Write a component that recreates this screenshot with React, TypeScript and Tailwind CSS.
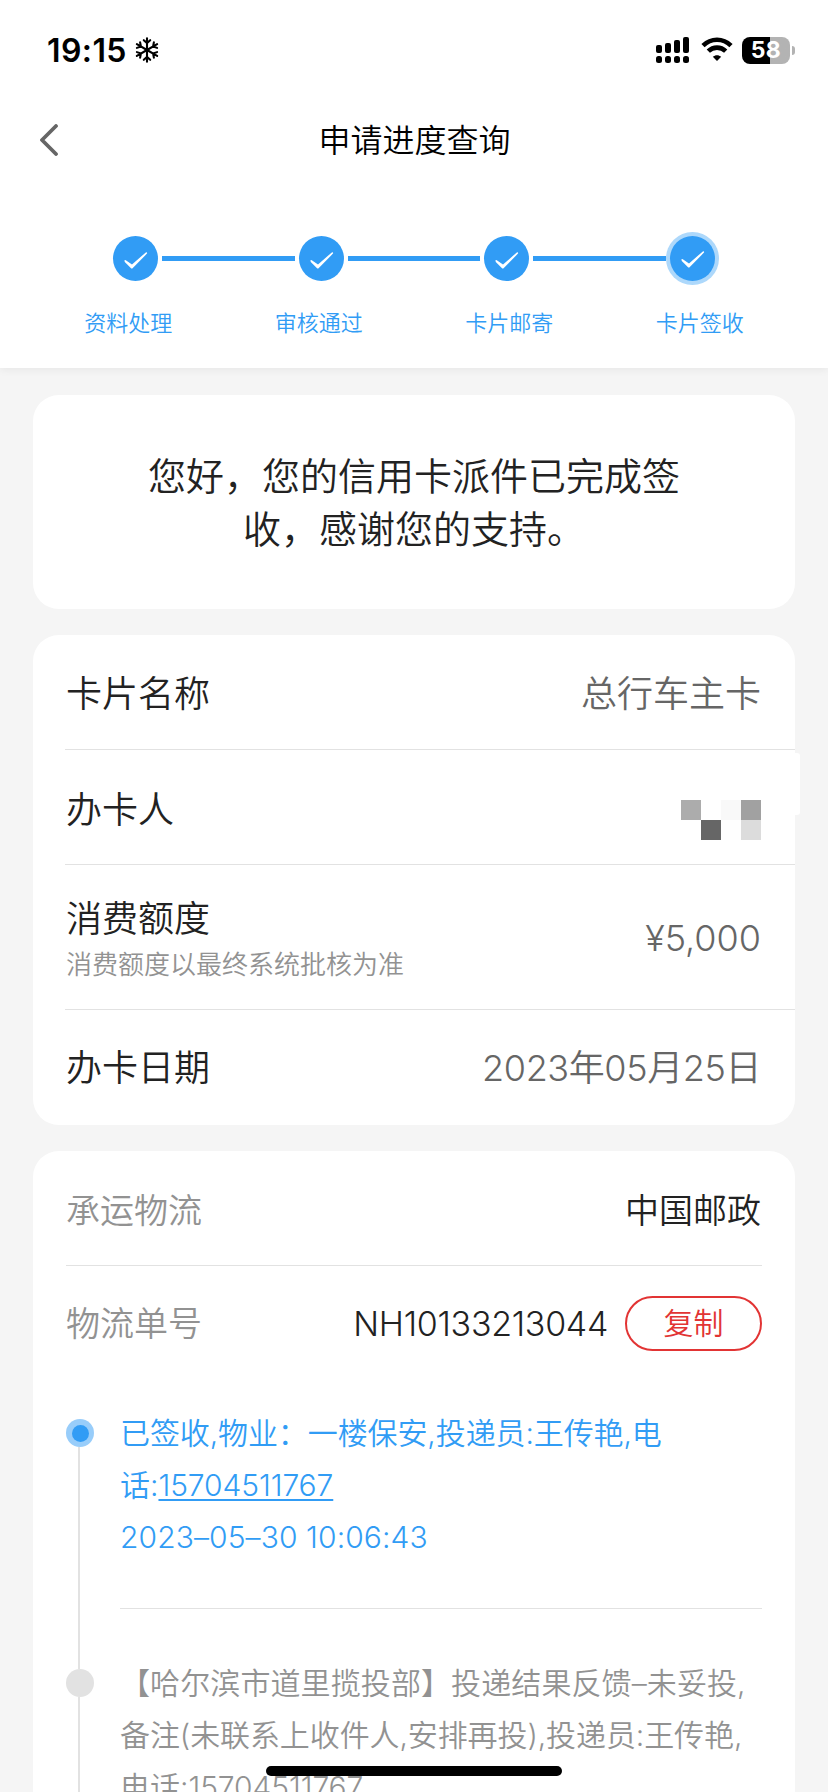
import type { ReactNode } from "react";

const steps = ["资料处理", "审核通过", "卡片邮寄", "卡片签收"];

function StatusBar() {
  return (
    <div className="flex h-[100px] items-center justify-between pl-[47px] pr-[33px]">
      <div className="flex items-center gap-[8px]">
        <span className="pt-[1px] text-[32px] leading-[40px] font-semibold tracking-[0.4px]">19:15</span>
        <svg className="h-[26px] w-6" viewBox="0 0 24 26" fill="none" stroke="black" strokeWidth="2.1" strokeLinecap="round">
          {[0, 60, 120, 180, 240, 300].map((angle) => (
            <path key={angle} d="M12 13V1.3M8.8 3.2L12 6L15.2 3.2" transform={`rotate(${angle} 12 13)`} />
          ))}
        </svg>
      </div>
      <div className="flex items-center">
        <svg className="h-[28px] w-[34px]" viewBox="0 0 34 28">
          <rect x="0" y="9" width="6" height="8" rx="2" />
          <rect x="9" y="7" width="6" height="10" rx="2" />
          <rect x="18" y="4" width="6" height="13" rx="2" />
          <rect x="27" y="1" width="6" height="16" rx="2" />
          <rect x="0" y="20" width="6" height="7" rx="2.5" />
          <rect x="9" y="20" width="6" height="7" rx="2.5" />
          <rect x="18" y="20" width="6" height="7" rx="2.5" />
          <rect x="27" y="20" width="6" height="7" rx="2.5" />
        </svg>
        <svg className="ml-[10px] h-[28px] w-[34px]" viewBox="0 0 34 28" fill="none" stroke="black" strokeWidth="4.6">
          <path d="M3 9.6C11 1.8 23 1.8 31 9.6" />
          <path d="M8.3 15.2C13.2 10.4 20.8 10.4 25.7 15.2" />
          <path d="M17 25L12.8 20.8C15.2 18.6 18.8 18.6 21.2 20.8Z" fill="black" stroke="none" />
        </svg>
        <div className="ml-[8px] flex h-[27px] w-[48px] items-center justify-center rounded-[8px] bg-linear-to-r from-black from-58% to-[#b3b3b3] to-58%">
          <span className="text-[23px] leading-[27px] font-bold tracking-[0.5px] text-white">58</span>
        </div>
        <div className="ml-[2px] h-[9px] w-[3px] rounded-r-full bg-[#b3b3b3]" />
      </div>
    </div>
  );
}

function Check({ active }: { active: boolean }) {
  return (
    <div className={active ? "size-[53px] rounded-full bg-[#add8fb] p-1" : "size-[53px] rounded-full p-1"}>
      <div className="size-[45px] rounded-full bg-[#319cf5]">
        <svg className={active ? "size-[45px] -translate-y-px" : "size-[45px]"} viewBox="0 0 45 45">
          <path d="M11.4 24.6Q11.6 23.6 12.8 24.2L19 28.6L32.8 16.4Q34.6 16 34 17.6L19.8 32Q18.8 33 17.8 32L11.8 26Z" fill="white" />
        </svg>
      </div>
    </div>
  );
}

function InfoRow({ label, note, children, className }: { label: string; note?: string; children: ReactNode; className: string }) {
  return (
    <div className={`ml-8 flex items-center justify-between pl-[1px] pr-[34px] ${className}`}>
      <div className={note ? "pt-[7px]" : ""}>
        <div className="text-[36px] leading-[48px] text-[#222]">{label}</div>
        {note && <div className="text-[26px] leading-[44px] text-[#929292]">{note}</div>}
      </div>
      <div className="text-[36px] leading-[48px] text-[#666]">{children}</div>
    </div>
  );
}

export default function App() {
  return (
    <div className="relative flex h-[1792px] w-[828px] flex-col overflow-hidden bg-[#f5f5f5] font-['Inter','Noto_Sans_CJK_SC',sans-serif] font-[350] text-black">
      <header className="h-[368px] shrink-0 bg-white shadow-[0_2px_8px_rgba(0,0,0,0.06)]">
        <StatusBar />
        <nav className="grid h-[80px] grid-cols-[100px_1fr_100px] items-center">
          <svg className="ml-[40px] h-[32px] w-[19px]" viewBox="0 0 19 32" fill="none" stroke="#666" strokeWidth="3.8" strokeLinecap="round" strokeLinejoin="round">
            <path d="M16 2L2 16L16 30" />
          </svg>
          <h1 className="pl-[1px] pt-[2px] text-center text-[32px] leading-[40px]">申请进度查询</h1>
        </nav>
        <div className="ml-[109px] mt-[52px] flex w-[610px] items-center">
          {steps.map((step, i) => (
            <div key={step} className={i ? "flex flex-1 items-center" : "flex items-center"}>
              {i > 0 && <div className="h-[5px] flex-1 bg-[#319cf5]" />}
              <Check active={i === steps.length - 1} />
            </div>
          ))}
        </div>
        <div className="mx-[33px] mt-[22px] grid grid-cols-4 text-center text-[22px] leading-[32px] text-[#319cf5]">
          {steps.map((step) => (
            <span key={step}>{step}</span>
          ))}
        </div>
      </header>

      <section className="mx-[33px] mt-[27px] h-[214px] shrink-0 rounded-[26px] bg-white pt-[55px] text-center text-[38px] leading-[52.5px] text-[#222]">
        您好，您的信用卡派件已完成签
        <br />
        收，感谢您的支持。
      </section>

      <section className="relative mx-[33px] mt-[26px] shrink-0 rounded-[26px] bg-white">
        <div className="absolute -right-[5px] top-[118px] h-[62px] w-[5px] rounded-r-[3px] bg-white" />
        <InfoRow label="卡片名称" className="h-[115px] border-b border-[#e2e2e2] pt-[4px]">总行车主卡</InfoRow>
        <InfoRow label="办卡人" className="h-[115px] border-b border-[#e2e2e2] pt-[5px]">
          <div className="mt-[21px] grid grid-cols-[repeat(4,20px)] grid-rows-[repeat(2,20px)]">
            <i className="bg-[#acacac]" />
            <i />
            <i className="bg-[#f9f9f9]" />
            <i className="bg-[#a1a1a1]" />
            <i />
            <i className="bg-[#666]" />
            <i className="bg-[#fefefe]" />
            <i className="bg-[#dcdcdc]" />
          </div>
        </InfoRow>
        <InfoRow label="消费额度" note="消费额度以最终系统批核为准" className="h-[145px] border-b border-[#e2e2e2]">
          <div className="pt-[2px]">¥5,000</div>
        </InfoRow>
        <InfoRow label="办卡日期" className="h-[115px]">
          <span className="tracking-[-0.4px]">2023年05月25日</span>
        </InfoRow>
      </section>

      <section className="mx-[33px] mt-[26px] h-[700px] shrink-0 rounded-t-[26px] bg-white px-[33px]">
        <div className="flex h-[115px] items-center justify-between border-b border-[#e2e2e2] pr-[1px] pt-[5px] text-[34px] leading-[44px]">
          <span className="text-[#929292]">承运物流</span>
          <span className="text-[#222]">中国邮政</span>
        </div>
        <div className="flex h-[115px] items-center text-[34px] leading-[44px]">
          <span className="text-[#929292]">物流单号</span>
          <span className="ml-auto tracking-[-0.3px] text-[#222]">NH10133213044</span>
          <button className="ml-[17px] h-[55px] w-[137px] rounded-full border-2 border-[#e23434] pb-[2px] text-[30px] leading-[48px] text-[#e23434]">复制</button>
        </div>

        <ol className="text-[30px] leading-[52px]">
          <li className="flex">
            <div className="flex w-[54px] shrink-0 flex-col">
              <div className="mt-[38px] flex size-[28px] items-center justify-center rounded-full bg-[#98cdfa]">
                <div className="size-[17px] rounded-full bg-[#319cf5]" />
              </div>
              <div className="ml-3 w-[2px] flex-1 bg-[#e2e2e2]" />
            </div>
            <div className="h-[228px] flex-1 border-b border-[#e2e2e2] pt-[26px] text-[#319cf5]">
              <span className="tracking-[-0.1px]">已签收,物业：一楼保安,投递员:王传艳,电</span>
              <br />
              话:<a className="tracking-[-0.1px] underline decoration-2 underline-offset-[3px]">15704511767</a>
              <br />
              <span className="tracking-[0.1px]">2023–05–30 10:06:43</span>
            </div>
          </li>
          <li className="flex">
            <div className="flex w-[54px] shrink-0 flex-col">
              <div className="ml-3 h-[60px] w-[2px] bg-[#e2e2e2]" />
              <div className="size-[28px] rounded-full bg-[#e2e2e2]" />
              <div className="ml-3 w-[2px] flex-1 bg-[#e2e2e2]" />
            </div>
            <div className="h-[240px] flex-1 whitespace-nowrap pt-[48px] text-[#929292]">
              <span className="tracking-[0.1px]">【哈尔滨市道里揽投部】投递结果反馈–未妥投,</span>
              <br />
              <span className="tracking-[-0.1px]">备注(未联系上收件人,安排再投),投递员:王传艳,</span>
              <br />
              电话:<span className="tracking-[-0.1px]">15704511767</span>
            </div>
          </li>
        </ol>
      </section>

      <div className="absolute left-[266px] top-[1766px] h-[10px] w-[296px] rounded-full bg-black" />
    </div>
  );
}
